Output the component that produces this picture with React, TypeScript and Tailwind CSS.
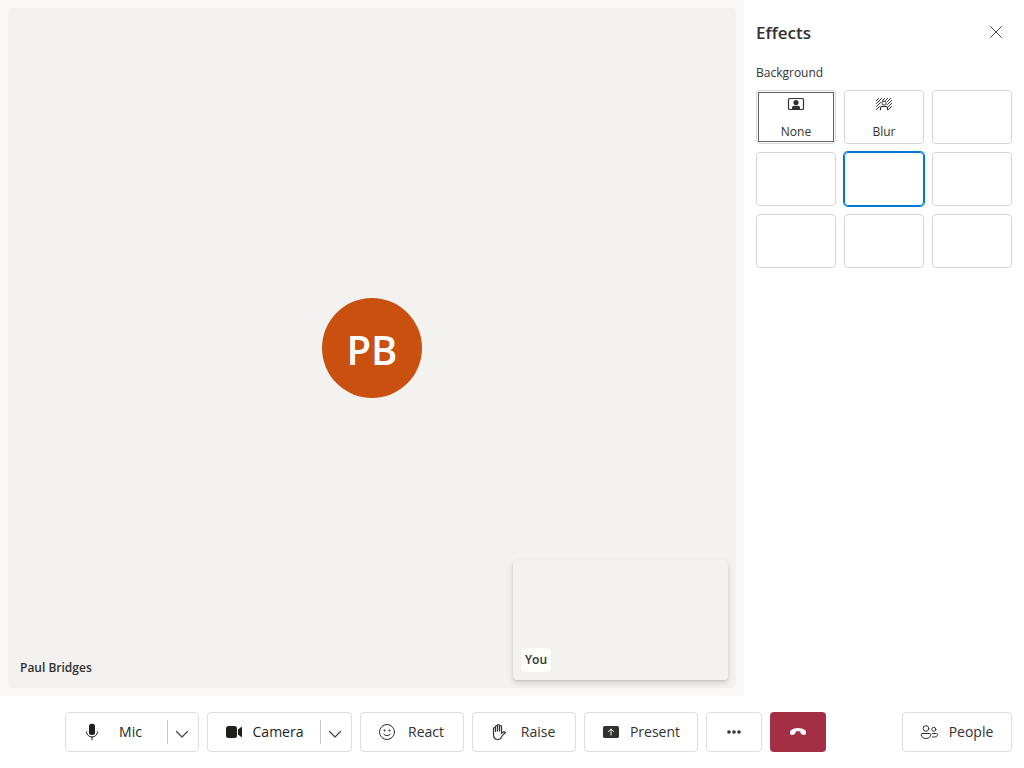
import { useState } from "react";
import type { ReactNode } from "react";

const stroke = { fill: "none", stroke: "currentColor", strokeLinecap: "round", strokeLinejoin: "round" } as const;

function Icon({ children }: { children: ReactNode }) {
  return (
    <svg viewBox="0 0 20 20" className="size-5 shrink-0" aria-hidden="true">
      {children}
    </svg>
  );
}

const MicIcon = () => (
  <Icon>
    <rect x="7" y="1.800" width="6" height="11.200" rx="2.500" fill="currentColor" />
    <path d="M4.500 10a5.500 5 0 0 0 11 0M10 15v2.800" {...stroke} />
  </Icon>
);

const CameraIcon = () => (
  <Icon>
    <rect x="2" y="4" width="11" height="12" rx="2.500" fill="currentColor" />
    <path d="M14 7.500v5l2.800 2.300c.5.400 1.200.1 1.200-.6V5.800c0-.7-.7-1-1.200-.6z" fill="currentColor" />
  </Icon>
);

const SmileIcon = () => (
  <Icon>
    <circle cx="10" cy="10" r="7.500" {...stroke} />
    <circle cx="7.500" cy="8.500" r="1" fill="currentColor" />
    <circle cx="12.500" cy="8.500" r="1" fill="currentColor" />
    <path d="M6.800 12.200a4 4 0 0 0 6.400 0" {...stroke} />
  </Icon>
);

const HandIcon = () => (
  <Icon>
    <path
      d="M6.500 9.500V4.500a1 1 0 0 1 2 0V9M8.500 9V3.500a1 1 0 0 1 2 0V9M10.500 9V4.500a1 1 0 0 1 2 0v6.800M6.500 6.500a1 1 0 0 0-2 0v5.700c0 3.300 1.500 5.300 4.300 5.300 2 0 3.200-.9 3.700-2.600.5-1.500 2.200-2.700 4-4.400-.8-1-2.400-.9-4 .8"
      {...stroke}
      strokeWidth="1.200"
    />
  </Icon>
);

const PresentIcon = () => (
  <Icon>
    <rect x="2" y="4" width="16" height="12" rx="1.800" fill="currentColor" />
    <path d="M10 13V7.200M7.500 9.500 10 7l2.500 2.500" fill="none" stroke="#fff" strokeLinecap="round" strokeLinejoin="round" />
  </Icon>
);

const MoreIcon = () => (
  <Icon>
    <circle cx="5" cy="10" r="1.800" fill="currentColor" />
    <circle cx="10" cy="10" r="1.800" fill="currentColor" />
    <circle cx="15" cy="10" r="1.800" fill="currentColor" />
  </Icon>
);

const HangUpIcon = () => (
  <Icon>
    <path
      d="M18 10.800l-.2 1c-.2.900-1 1.400-1.900 1.200l-1.800-.4c-.8-.2-1.300-.7-1.500-1.500l-.4-1.600c-1.400-.5-3-.5-4.400 0l-.4 1.600c-.2.800-.7 1.300-1.500 1.500l-1.800.4c-.9.200-1.700-.3-1.900-1.200l-.2-1c-.2-1 .1-1.900.9-2.600C4.800 6.700 7.200 6 10 6s5.200.7 7.100 2.200c.8.700 1.100 1.600.9 2.600z"
      fill="currentColor"
    />
  </Icon>
);

const PeopleIcon = () => (
  <Icon>
    <circle cx="7" cy="6.500" r="2.800" {...stroke} />
    <circle cx="14.800" cy="7.300" r="2" {...stroke} />
    <path
      d="M3.200 11.500h7.600c.6 0 1 .4 1 1 0 2.200-1.800 4-4.800 4s-4.800-1.800-4.800-4c0-.6.400-1 1-1zM13.500 11.500h4c.6 0 1 .4 1 1 0 2-2 3-5 2.500"
      {...stroke}
    />
  </Icon>
);

const ChevronIcon = () => (
  <svg viewBox="0 0 14 14" className="size-3.5" aria-hidden="true">
    <path d="M1.500 4.500 7 10l5.500-5.500" {...stroke} strokeWidth="1.200" />
  </svg>
);

const NoneIcon = () => (
  <Icon>
    <rect x="2.500" y="4.500" width="15" height="11" rx="1" {...stroke} strokeWidth="1.200" />
    <circle cx="10" cy="8.500" r="2.600" fill="currentColor" />
    <path d="M6 15v-1.200c0-1.200.8-2 2-2h4c1.200 0 2 .8 2 2V15z" fill="currentColor" />
  </Icon>
);

const BlurIcon = () => (
  <Icon>
    <path
      d="M2.400 6.600 4.600 4.400M2.400 9.600 7.600 4.400M2.400 12.600 6.500 8.500M2.400 15.600 5.500 12.500M8.600 6.400l2-2M11.600 6.400l2-2M13.500 7.500l3.100-3.100M13.500 10.500l4.100-4.100M14 13l3.600-3.600M14.500 15.500l3.100-3.100"
      {...stroke}
    />
    <rect x="8" y="7.300" width="4" height="3.700" rx="1.200" {...stroke} />
    <path d="M6.500 15.700V14c0-.8.600-1.500 1.500-1.500h4c.9 0 1.500.7 1.500 1.500v1.700" {...stroke} strokeWidth="1.200" />
  </Icon>
);

const frame = "h-10 rounded border border-[#e1dfdd] bg-white";

function BarButton({ label, icon, className }: { label: string; icon: ReactNode; className: string }) {
  return (
    <button type="button" className={`flex items-center pl-4 ${frame} ${className}`}>
      {icon}
      <span className="flex-1 pr-2 text-center">{label}</span>
    </button>
  );
}

function SplitButton({ label, icon, className }: { label: string; icon: ReactNode; className: string }) {
  return (
    <div className={`flex items-center ${frame} ${className}`}>
      <button type="button" className="flex h-full min-w-0 flex-1 items-center pl-4 text-[#201f1e]">
        {icon}
        <span className="flex-1 pl-2 text-center">{label}</span>
        <span className="w-4 shrink" />
      </button>
      <button
        type="button"
        aria-label={`${label} options`}
        className="flex h-6 w-[31px] shrink-0 items-center justify-center border-l border-[#c8c6c4] pt-1 pr-0.5 text-[#484644]"
      >
        <ChevronIcon />
      </button>
    </div>
  );
}

const effects = [
  { name: "None", icon: <NoneIcon /> },
  { name: "Blur", icon: <BlurIcon /> },
  { name: "Image 1" },
  { name: "Image 2" },
  { name: "Image 3" },
  { name: "Image 4" },
  { name: "Image 5" },
  { name: "Image 6" },
  { name: "Image 7" },
];

function EffectsPane() {
  const [selected, setSelected] = useState("Image 3");
  return (
    <aside className="w-70 shrink-0 px-3 pt-4">
      <div className="flex h-8 items-center justify-between">
        <h2 className="pt-px text-[17px] font-semibold">Effects</h2>
        <button type="button" aria-label="Close" className="flex size-8 items-center justify-center text-[#484644]">
          <svg viewBox="0 0 12 12" className="size-3" aria-hidden="true">
            <path d="M.5.5l11 11M11.500.5l-11 11" {...stroke} />
          </svg>
        </button>
      </div>
      <h3 className="mt-4 text-xs leading-[18px]">Background</h3>
      <div className="mt-2 grid grid-cols-3 gap-2">
        {effects.map(({ name, icon }) => (
          <button
            key={name}
            type="button"
            aria-label={name}
            aria-pressed={selected === name}
            onClick={() => setSelected(name)}
            className={`relative flex h-[54px] flex-col items-center gap-1 rounded border pt-[3px] text-xs leading-7 ${
              selected === name ? "border-[#0078d4] ring-1 ring-[#0078d4]" : "border-[#d8d6d4]"
            }`}
          >
            {icon}
            {icon && <span>{name}</span>}
            {name === "None" && <span className="pointer-events-none absolute inset-px border border-[#605e5c]" />}
          </button>
        ))}
      </div>
    </aside>
  );
}

export default function App() {
  return (
    <div className="flex h-screen flex-col bg-white font-['Open_Sans','Noto_Sans',sans-serif] text-[#323130]">
      <div className="flex min-h-0 flex-1">
        <main className="flex flex-1 bg-[#faf9f8] p-2">
          <section className="relative flex flex-1 items-center justify-center rounded bg-[#f3f2f1]">
            <div className="flex size-25 items-center justify-center rounded-full bg-[#ca5010] pt-1 text-[40px] font-semibold text-white">
              PB
            </div>
            <div className="absolute bottom-2 left-2 px-1 text-xs leading-6 font-semibold">Paul Bridges</div>
            <div className="absolute right-2 bottom-2 flex h-30 w-[215px] items-end rounded bg-[#f3f2f1] p-2 shadow-[0_3px_7px_rgba(0,0,0,0.13),0_1px_2px_rgba(0,0,0,0.11)]">
              <span className="rounded bg-[#fdfdfc] px-1 text-xs leading-6 font-semibold">You</span>
            </div>
          </section>
        </main>
        <EffectsPane />
      </div>
      <footer className="flex items-center gap-[11px] py-4 pr-3 text-sm">
        <div className="flex flex-1 justify-center gap-2">
          <SplitButton label="Mic" icon={<MicIcon />} className="w-[134px]" />
          <SplitButton label="Camera" icon={<CameraIcon />} className="w-[145px]" />
          <BarButton label="React" icon={<SmileIcon />} className="w-26" />
          <BarButton label="Raise" icon={<HandIcon />} className="w-26" />
          <BarButton label="Present" icon={<PresentIcon />} className="w-[114px]" />
          <button type="button" aria-label="More" className={`flex w-14 items-center justify-center ${frame}`}>
            <MoreIcon />
          </button>
          <button type="button" aria-label="Leave" className="flex h-10 w-14 items-center justify-center rounded bg-[#a42e43] text-white">
            <HangUpIcon />
          </button>
        </div>
        <BarButton label="People" icon={<PeopleIcon />} className="w-[110px]" />
      </footer>
    </div>
  );
}
